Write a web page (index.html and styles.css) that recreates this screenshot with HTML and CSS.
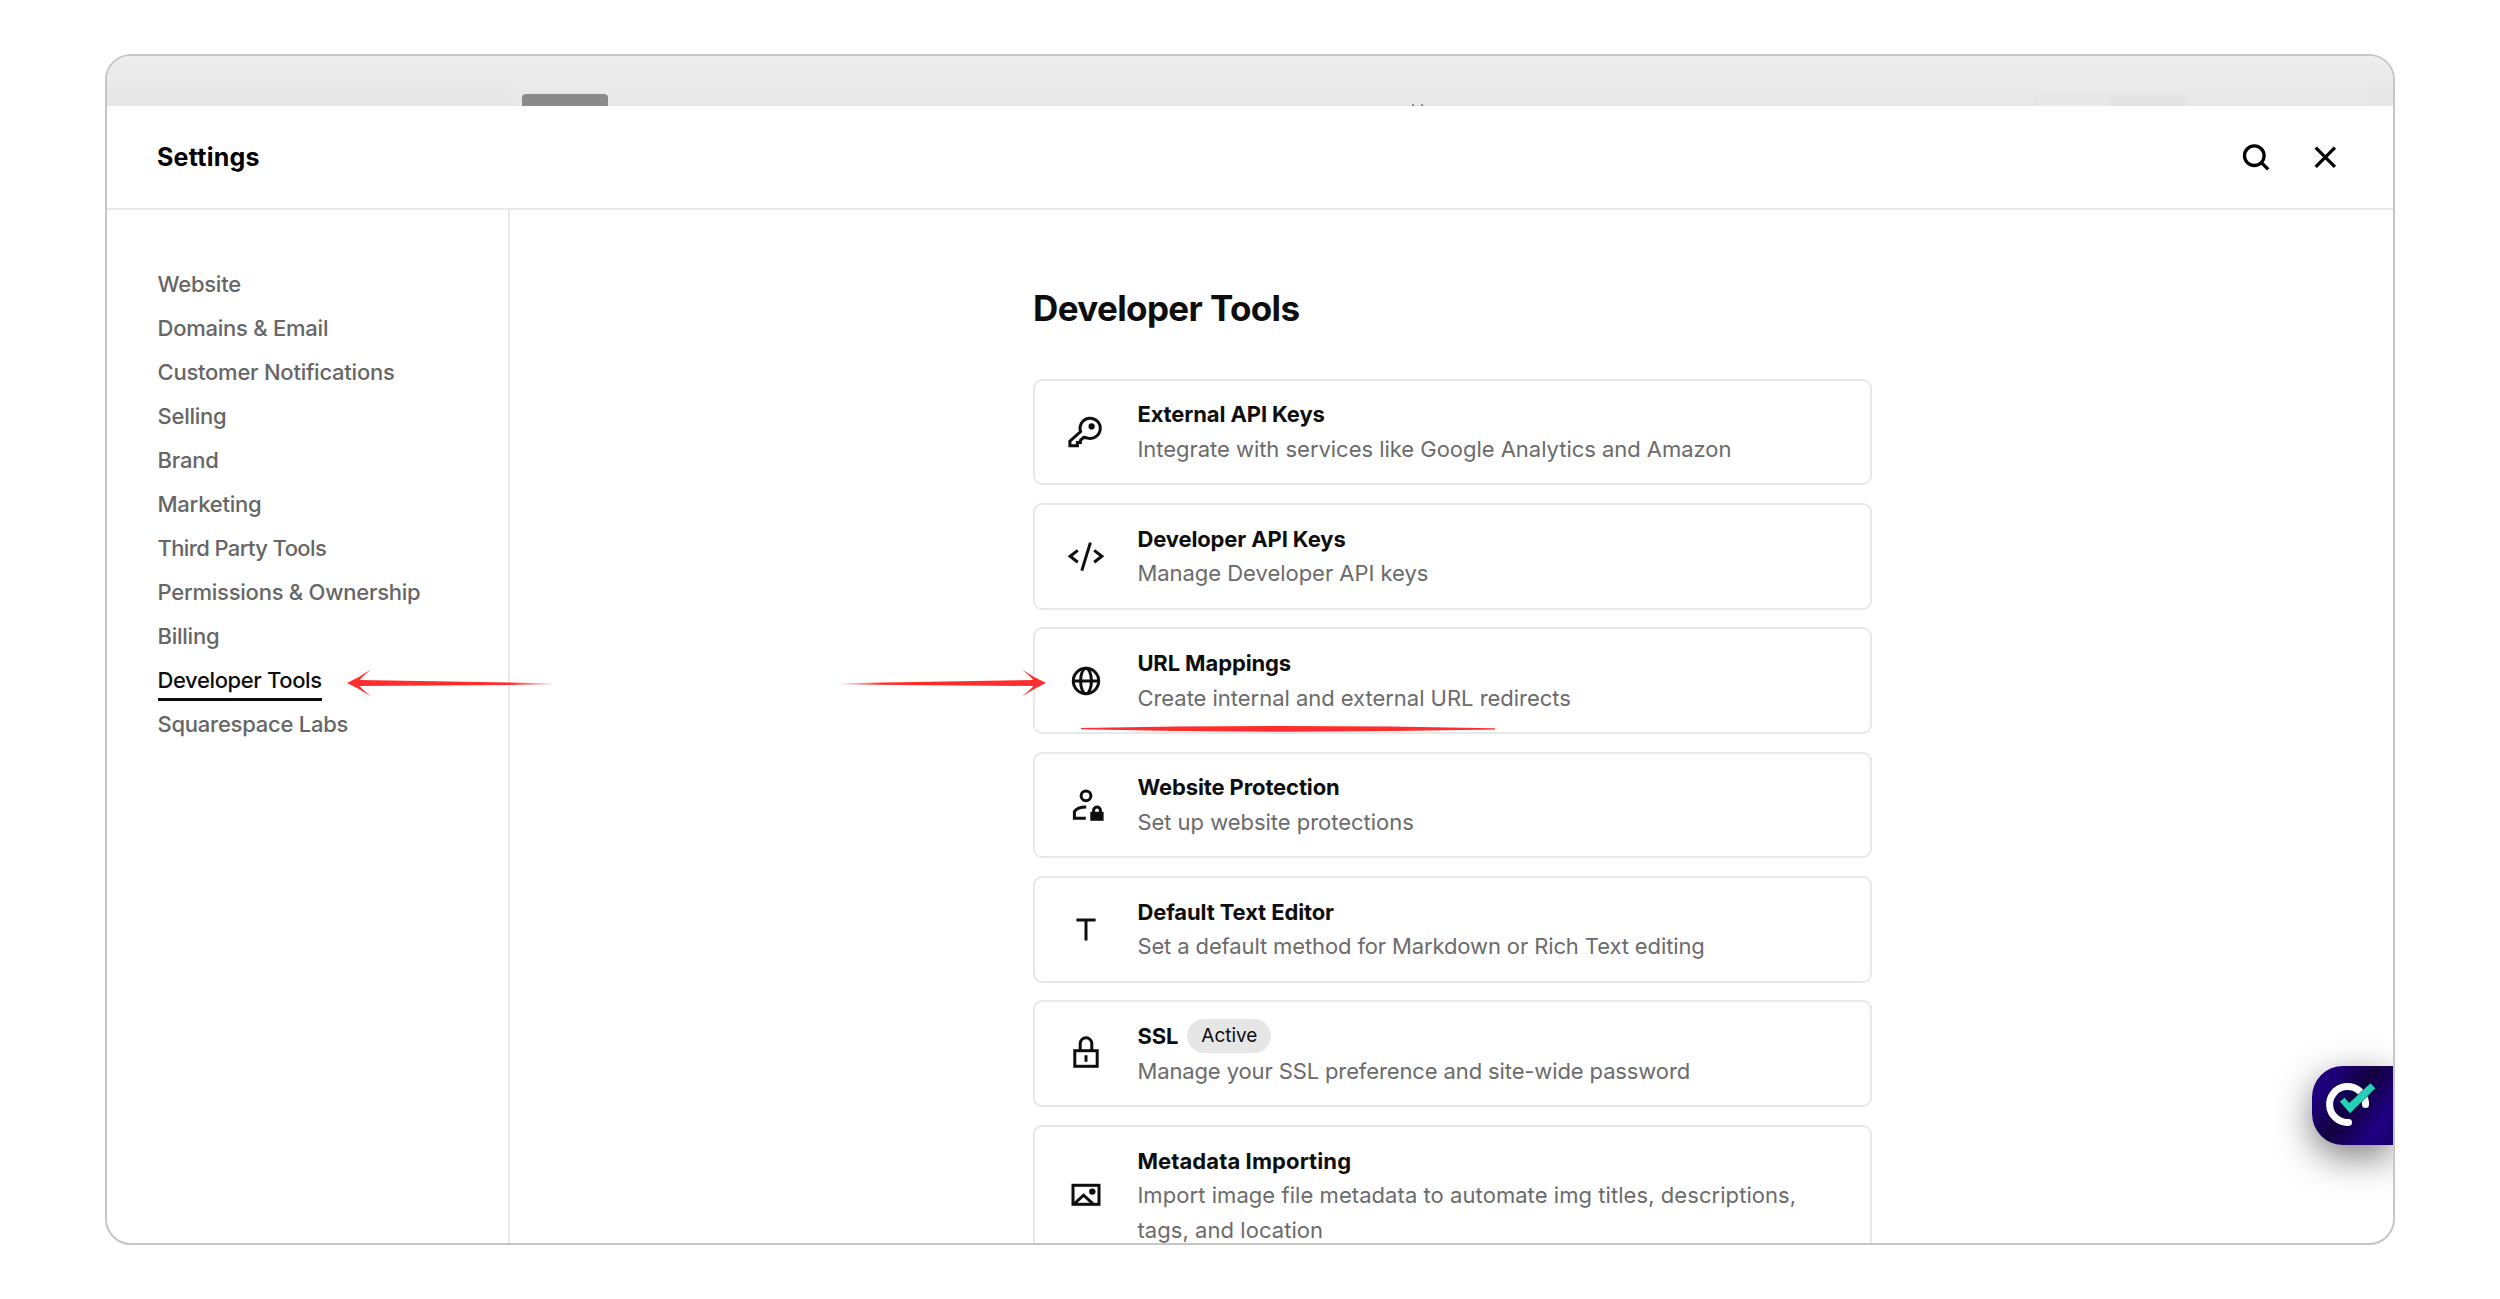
FILE: index.html
```html
<!DOCTYPE html>
<html lang="en">
<head>
    <meta charset="UTF-8">
    <meta name="viewport" content="width=device-width, initial-scale=1.0">
    <title>Settings - Developer Tools</title>
    <link rel="stylesheet" href="styles.css">
</head>
<body>
    <div class="window">
        <div class="backdrop">
            <div class="preview">
                <div class="preview-button"></div>
                <div class="preview-marks"><span></span><span></span></div>
                <div class="preview-toggle"><div></div></div>
            </div>
        </div>

        <header class="header">
            <h1>Settings</h1>
            <div class="header-actions">
                <svg class="icon icon-bold" viewBox="0 0 36 36"><circle cx="16.3" cy="16.7" r="9.8"/><path d="M23.2 23.4l7 7"/></svg>
                <svg class="icon icon-bold" viewBox="0 0 36 36"><path d="M8.7 8.6l19.200 19.200M27.900 8.600l-19.200 19.200"/></svg>
            </div>
        </header>

        <div class="content">
            <nav class="sidebar">
                <a>Website</a>
                <a>Domains &amp; Email</a>
                <a>Customer Notifications</a>
                <a>Selling</a>
                <a>Brand</a>
                <a>Marketing</a>
                <a class="tight">Third Party Tools</a>
                <a>Permissions &amp; Ownership</a>
                <a>Billing</a>
                <a class="active">Developer Tools</a>
                <a>Squarespace Labs</a>
            </nav>

            <main class="main">
                <h2>Developer Tools</h2>
                <div class="cards">
                    <div class="card">
                        <svg class="icon" viewBox="0 0 36 36">
                            <path d="M12.6 17.6A10.1 10.1 0 1 1 18.6 23.8L15.6 23.4 12.4 26.4V28.6H9.4V31.8H1.9V27.2L12.6 17.6Z"/>
                            <circle class="fill" cx="23.6" cy="12.4" r="3.1"/>
                        </svg>
                        <div class="card-text">
                            <h3>External API Keys</h3>
                            <p>Integrate with services like Google Analytics and Amazon</p>
                        </div>
                    </div>
                    <div class="card">
                        <svg class="icon" viewBox="0 0 36 36"><path d="M9.8 12.4L2.2 18.3l7.6 5.9M26.2 12.4l7.6 5.9-7.6 5.9M22.4 4.6l-8.6 28"/></svg>
                        <div class="card-text">
                            <h3>Developer API Keys</h3>
                            <p>Manage Developer API keys</p>
                        </div>
                    </div>
                    <div class="card">
                        <svg class="icon" viewBox="0 0 36 36"><circle cx="18" cy="18" r="12.7"/><ellipse cx="18" cy="18" rx="5.4" ry="12.7"/><path d="M5.3 18h25.4"/></svg>
                        <div class="card-text">
                            <h3>URL Mappings</h3>
                            <p>Create internal and external URL redirects</p>
                        </div>
                    </div>
                    <div class="card">
                        <svg class="icon" viewBox="0 0 36 36">
                            <circle cx="18" cy="8.8" r="4.9"/>
                            <path d="M18.2 20C12.5 20 8.5 21.3 6.4 24.6V31.2H17.8"/>
                            <path d="M25.6 26v-2.6a3.4 3.4 0 0 1 6.8 0V26"/>
                            <rect class="fill" x="22.3" y="24.8" width="13.3" height="9"/>
                        </svg>
                        <div class="card-text">
                            <h3>Website Protection</h3>
                            <p>Set up website protections</p>
                        </div>
                    </div>
                    <div class="card">
                        <svg class="icon" viewBox="0 0 36 36"><path d="M8.4 9h19.2M18 9v20.4"/></svg>
                        <div class="card-text">
                            <h3>Default Text Editor</h3>
                            <p class="tight">Set a default method for Markdown or Rich Text editing</p>
                        </div>
                    </div>
                    <div class="card">
                        <svg class="icon" viewBox="0 0 36 36"><rect x="6.8" y="14.7" width="22.4" height="15.6"/><path d="M12.2 14.5V7.6a5.8 5.8 0 0 1 11.6 0v6.9M18 19.2v6.6"/></svg>
                        <div class="card-text">
                            <h3>SSL <span class="tag">Active</span></h3>
                            <p class="tight">Manage your SSL preference and site-wide password</p>
                        </div>
                    </div>
                    <div class="card">
                        <svg class="icon" viewBox="0 0 36 36"><rect x="5" y="8.3" width="26" height="19"/><path d="M6.4 26.6l9.2-8.4 9.2 8.4"/><circle class="fill" cx="24.3" cy="14.6" r="3.2"/></svg>
                        <div class="card-text">
                            <h3 class="wide">Metadata Importing</h3>
                            <p class="loose">Import image file metadata to automate img titles, descriptions, tags, and location</p>
                        </div>
                    </div>
                </div>
            </main>
        </div>

        <!-- red annotations -->
        <svg class="arrow arrow-left" viewBox="0 0 206 28">
            <defs>
                <linearGradient id="fade">
                    <stop offset="0.8" stop-color="#ff2d2d"/>
                    <stop offset="1" stop-color="#ff2d2d" stop-opacity="0.1"/>
                </linearGradient>
            </defs>
            <path fill="url(#fade)" d="M0 14Q13 8 24 0.500Q15 8 12.500 11L205 14.200V15.600L12.500 17Q15 20 24 27.500Q13 20 0 14Z"/>
        </svg>
        <svg class="arrow arrow-right" viewBox="0 0 206 28">
            <path fill="url(#fade)" d="M0 14Q13 8 24 0.500Q15 8 12.500 11L205 14.200V15.600L12.500 17Q15 20 24 27.500Q13 20 0 14Z"/>
        </svg>
        <svg class="stroke-line" viewBox="0 0 414 6"><path fill="#ff2d2d" d="M0 2.100Q207-2.100 414 2.300V3.600Q207 8 0 3.300Z"/></svg>

        <div class="badge">
            <svg viewBox="0 0 50 44">
                <path d="M22.500 39.500A18 18 0 1 1 39.500 19.500V21.500" fill="none" stroke="#fff" stroke-width="7" stroke-linecap="round"/>
                <path d="M13.500 18.500L18.500 14.500L23.300 19.800L44.500 0L49.500 5.200L24 30.500Z" fill="#25d3b4" stroke="#17005a" stroke-width="0.5"/>
            </svg>
        </div>
    </div>
</body>
</html>
```
FILE: styles.css
```css
* { box-sizing: border-box; }
body { margin: 0; padding: 54px 105px; background-color: #fff; font-family: Inter, "Liberation Sans", sans-serif; color: #0e0e0e; }
h1, h2, h3, p { margin: 0; }
.window { position: relative; display: flex; flex-direction: column; width: 2290px; height: 1191px; border: 2px solid #c6c6c6; border-radius: 26px; overflow: hidden; background-color: #fff; }

.backdrop { flex: none; height: 50px; padding: 24px 24px 0 401px; background: linear-gradient(#eeeeee, #e5e5e5); }
.preview { display: flex; align-items: flex-end; height: 26px; padding-left: 14px; background: linear-gradient(#ebebeb, #e7e7e7); }
.preview-button { width: 86px; height: 12px; border-radius: 4px 4px 0 0; background-color: #8a8a8a; }
.preview-marks { display: flex; gap: 7px; margin-left: 804px; }
.preview-marks span { width: 2px; height: 2px; background-color: #8f8f8f; }
.preview-toggle { width: 151px; height: 11px; margin-left: 612px; padding: 2px 0 0 2px; background-color: #e4e4e4; }
.preview-toggle div { width: 73px; height: 9px; background-color: #e8e8e8; }

.header { flex: none; display: flex; align-items: center; justify-content: space-between; height: 104px; padding: 0 50px; border-bottom: 2px solid #e9e9e9; }
.header h1 { font-size: 25px; font-weight: 650; line-height: 36px; letter-spacing: 0.25px; color: #000; }
.header-actions { display: flex; gap: 33px; }

.icon { flex: none; width: 36px; height: 36px; fill: none; stroke: #0e0e0e; stroke-width: 3; }
.icon-bold { stroke: #000; stroke-width: 3.3; }
.icon .fill { fill: #0e0e0e; stroke: none; }

.content { display: flex; flex: 1; min-height: 0; }
.sidebar { flex: none; display: flex; flex-direction: column; align-items: flex-start; width: 403px; padding: 52px 0 0 50.5px; border-right: 2px solid #e9e9e9; }
.sidebar a { height: 44px; font-size: 22px; font-weight: 500; line-height: 44px; letter-spacing: -0.24px; color: #666; white-space: nowrap; }
.sidebar a.tight { letter-spacing: -0.62px; }
.sidebar a.active { height: 43px; margin-bottom: 1px; letter-spacing: -0.38px; color: #0e0e0e; box-shadow: inset 0 -3px #0e0e0e; }

.main { flex: 1; padding: 72.5px 0 0 523px; }
.main h2 { margin-bottom: 46px; font-size: 35px; font-weight: 650; line-height: 50px; letter-spacing: -0.62px; }
.cards { display: flex; flex-direction: column; gap: 17.6px; width: 839px; }
.card { display: flex; align-items: center; gap: 33px; padding: 16.8px 33.4px; border: 2px solid #e8e8e8; border-radius: 9px; }
.card-text { flex: 1; font-size: 22px; line-height: 34.6px; }
.card h3 { display: flex; align-items: center; gap: 9px; height: 34.6px; font-size: 22px; font-weight: 650; letter-spacing: -0.12px; }
.card h3.wide { letter-spacing: 0.1px; }
.card p { letter-spacing: -0.03px; color: #6b6b6b; }
.card p.tight { letter-spacing: -0.12px; }
.card p.loose { letter-spacing: 0.06px; }
.tag { height: 34px; padding: 0 14px; border-radius: 17px; background-color: #e6e6e6; font-size: 19px; font-weight: 400; line-height: 34px; letter-spacing: 0; }

.arrow { position: absolute; width: 206px; height: 28px; }
.arrow-left { left: 240px; top: 612.5px; }
.arrow-right { left: 733px; top: 612.5px; transform: scaleX(-1); }
.stroke-line { position: absolute; left: 974px; top: 670px; width: 414px; height: 6px; }

.badge { position: absolute; right: 0; top: 1010px; width: 81px; height: 79px; padding: 17px 0 0 14px; border-radius: 31px 0 0 31px; background: linear-gradient(125deg, #1d007a 0%, #1d007a 20%, #12003f 48%, #1f0080 78%, #1a006b 100%); box-shadow: 0 12px 36px rgba(0, 0, 0, 0.5); }
.badge svg { display: block; width: 50px; height: 44px; overflow: visible; }
```
